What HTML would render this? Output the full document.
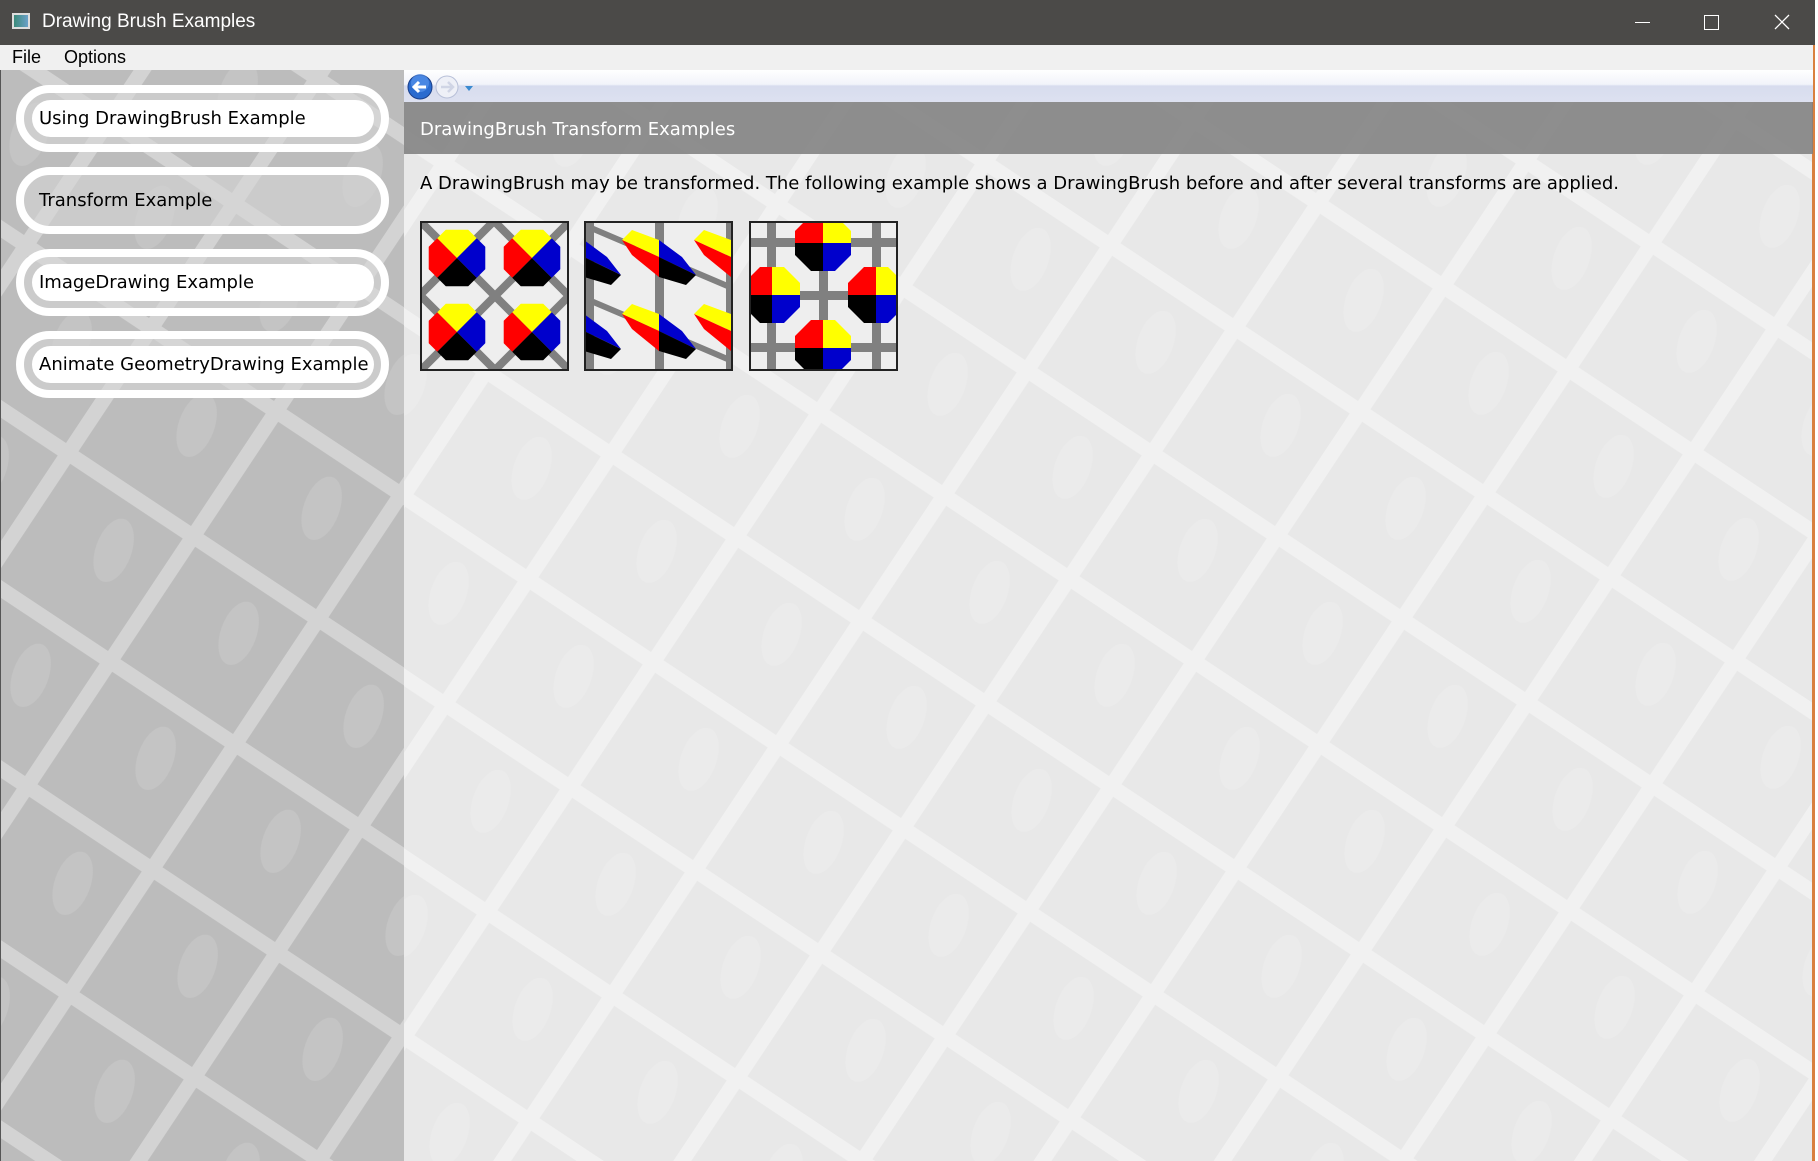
<!DOCTYPE html>
<html><head><meta charset="utf-8"><style>
*{margin:0;padding:0;box-sizing:border-box}
body{width:1818px;height:1161px;overflow:hidden;background:#fff;position:relative;font-family:"DejaVu Sans",sans-serif}
.abs{position:absolute}
#title{left:0;top:0;width:1815px;height:45px;background:#4b4a48;color:#fff;font:19px "Liberation Sans",sans-serif}
#menu{left:0;top:45px;width:1813px;height:25px;background:#f0f0f0;font:18px "Liberation Sans",sans-serif;color:#000}
.btn{position:absolute;left:16px;width:373px;height:67px;border:8px solid #fff;border-radius:34px;background:rgba(215,215,215,0.55)}
.btn .in{position:absolute;left:8px;right:7px;top:7px;bottom:7px;background:#fff;border-radius:20px}
.btn span{position:absolute;left:15px;top:15px;font-size:18px;color:#000;white-space:nowrap}
</style></head><body>
<svg class="abs" style="left:0;top:0" width="1818" height="1161">
<defs>
<pattern id="pl" patternUnits="userSpaceOnUse" width="100" height="100" patternTransform="matrix(1.25 0.83 -0.83 1.25 66 443)">
<rect width="100" height="100" fill="#bcbcbc"/>
<rect x="0" y="0" width="100" height="10" fill="#d3d3d3"/>
<rect x="0" y="0" width="10" height="100" fill="#d3d3d3"/>
<ellipse cx="66" cy="42" rx="12" ry="22" transform="rotate(-14 66 42)" fill="#c4c4c4"/>
</pattern>
<pattern id="pr" patternUnits="userSpaceOnUse" width="100" height="100" patternTransform="matrix(1.25 0.83 -0.83 1.25 526 569)">
<rect width="100" height="100" fill="#e8e8e8"/>
<rect x="0" y="0" width="100" height="10" fill="#f1f1f1"/>
<rect x="0" y="0" width="10" height="100" fill="#f1f1f1"/>
<ellipse cx="66" cy="42" rx="12" ry="22" transform="rotate(-14 66 42)" fill="#ebebeb"/>
</pattern>
</defs>
<rect x="0" y="70" width="404" height="1091" fill="url(#pl)"/>
<rect x="404" y="70" width="1409" height="1091" fill="url(#pr)"/>
<rect x="0" y="0" width="1" height="1161" fill="#555"/>
<rect x="1812" y="0" width="3" height="1161" fill="#d9803f"/>
</svg>

<div id="title" class="abs">
<div class="abs" style="left:12px;top:13px;width:18px;height:16px;background:linear-gradient(90deg,#3b8a7a,#6aa0c8);border:2px solid #ddd"></div>
<div class="abs" style="left:42px;top:11px">Drawing Brush Examples</div>
<div class="abs" style="left:1635px;top:22px;width:15px;height:1px;background:#fff"></div>
<div class="abs" style="left:1704px;top:15px;width:15px;height:15px;border:1px solid #fff"></div>
<svg class="abs" style="left:1774px;top:14px" width="16" height="16"><path d="M1 1L15 15M15 1L1 15" stroke="#fff" stroke-width="1.3"/></svg>
</div>
<div id="menu" class="abs">
<span class="abs" style="left:12px;top:2px">File</span>
<span class="abs" style="left:64px;top:2px">Options</span>
</div>

<div class="btn" style="top:85px"><div class="in"></div><span>Using DrawingBrush Example</span></div>
<div class="btn" style="top:167px"><span>Transform Example</span></div>
<div class="btn" style="top:249px"><div class="in"></div><span>ImageDrawing Example</span></div>
<div class="btn" style="top:331px"><div class="in"></div><span>Animate GeometryDrawing Example</span></div>

<div class="abs" style="left:404px;top:70px;width:1409px;height:32px;background:linear-gradient(#ffffff 0%,#f1f3fa 45%,#d7dcee 50%,#dde1f0 100%)"></div>
<svg class="abs" style="left:404px;top:70px" width="80" height="32">
<circle cx="16" cy="17" r="12" fill="#2a6bcf" stroke="#1a3f8a"/>
<circle cx="16" cy="13" r="9" fill="#5f9af0" opacity=".6"/>
<path d="M22 17H11M15 12l-5 5 5 5" stroke="#fff" stroke-width="3" fill="none"/>
<circle cx="43" cy="17" r="11" fill="#eef0f7" stroke="#b8c0d8"/>
<path d="M37 17H48M44 12l5 5-5 5" stroke="#d0d5e5" stroke-width="2.5" fill="none"/>
<path d="M61 16h8l-4 5z" fill="#3a8ad0"/>
</svg>
<div class="abs" style="left:404px;top:102px;width:1409px;height:52px;background:rgba(128,128,128,0.88);color:#fff;font-size:18px;padding:17px 0 0 16px">DrawingBrush Transform Examples</div>
<div class="abs" style="left:420px;top:173px;font-size:18px;color:#000;white-space:nowrap">A DrawingBrush may be transformed. The following example shows a DrawingBrush before and after several transforms are applied.</div>

<svg width="0" height="0" style="position:absolute">
<defs>
<clipPath id="oc"><polygon points="28,12 12,28 -12,28 -28,12 -28,-12 -12,-28 12,-28 28,-12"/></clipPath>
<g id="oq"><g clip-path="url(#oc)">
<rect x="-30" y="-30" width="30" height="30" fill="#f00"/>
<rect x="0" y="-30" width="30" height="30" fill="#ff0"/>
<rect x="-30" y="0" width="30" height="30" fill="#000"/>
<rect x="0" y="0" width="30" height="30" fill="#00c"/></g></g>
<g id="sk">
<polygon points="38,19 48,9 75,19 75,36" fill="#ff0"/>
<polygon points="38,19 48,34 75,56 75,36" fill="#f00"/>
<polygon points="75,19 98,36 112,54 75,36" fill="#00c"/>
<polygon points="75,36 112,54 102,64 75,56" fill="#000"/>
</g>
</defs></svg>

<svg class="abs" style="left:420px;top:221px" width="149" height="150">
<rect width="149" height="150" fill="#eee"/>
<g stroke="#808080" stroke-width="8">
<path d="M-10 -10L160 160M64 -10L160 86M-10 64L86 160M84 -10L-10 84M160 -10L-10 160M160 64L64 160"/>
</g>
<use href="#oq" transform="translate(37,37) rotate(-45)"/>
<use href="#oq" transform="translate(112,37) rotate(-45)"/>
<use href="#oq" transform="translate(37,111) rotate(-45)"/>
<use href="#oq" transform="translate(112,111) rotate(-45)"/>
<rect x="1" y="1" width="147" height="148" fill="none" stroke="#222" stroke-width="2"/>
</svg>

<svg class="abs" style="left:584px;top:221px" width="149" height="150">
<rect width="149" height="150" fill="#eee"/>
<g fill="#808080"><rect x="2" y="0" width="8" height="150"/><rect x="71" y="0" width="9" height="150"/><rect x="142" y="0" width="7" height="150"/></g>
<g stroke="#808080" stroke-width="6"><path d="M0 4L160 72M0 77L160 145M0 -70L160 -2"/></g>
<use href="#sk" transform="translate(-75,0)"/><use href="#sk"/><use href="#sk" transform="translate(72,0)"/>
<use href="#sk" transform="translate(-75,74)"/><use href="#sk" transform="translate(0,74)"/><use href="#sk" transform="translate(72,74)"/>
<rect x="1" y="1" width="147" height="148" fill="none" stroke="#222" stroke-width="2"/>
</svg>

<svg class="abs" style="left:749px;top:221px" width="149" height="150">
<rect width="149" height="150" fill="#eee"/>
<g fill="#808080"><rect x="0" y="17" width="149" height="9"/><rect x="0" y="70" width="149" height="9"/><rect x="0" y="122" width="149" height="9"/>
<rect x="18" y="0" width="9" height="150"/><rect x="70" y="0" width="9" height="150"/><rect x="123" y="0" width="9" height="150"/></g>
<use href="#oq" transform="translate(74,22)"/>
<use href="#oq" transform="translate(23,74)"/>
<use href="#oq" transform="translate(127,74)"/>
<use href="#oq" transform="translate(74,127)"/>
<rect x="1" y="1" width="147" height="148" fill="none" stroke="#222" stroke-width="2"/>
</svg>
</body></html>
